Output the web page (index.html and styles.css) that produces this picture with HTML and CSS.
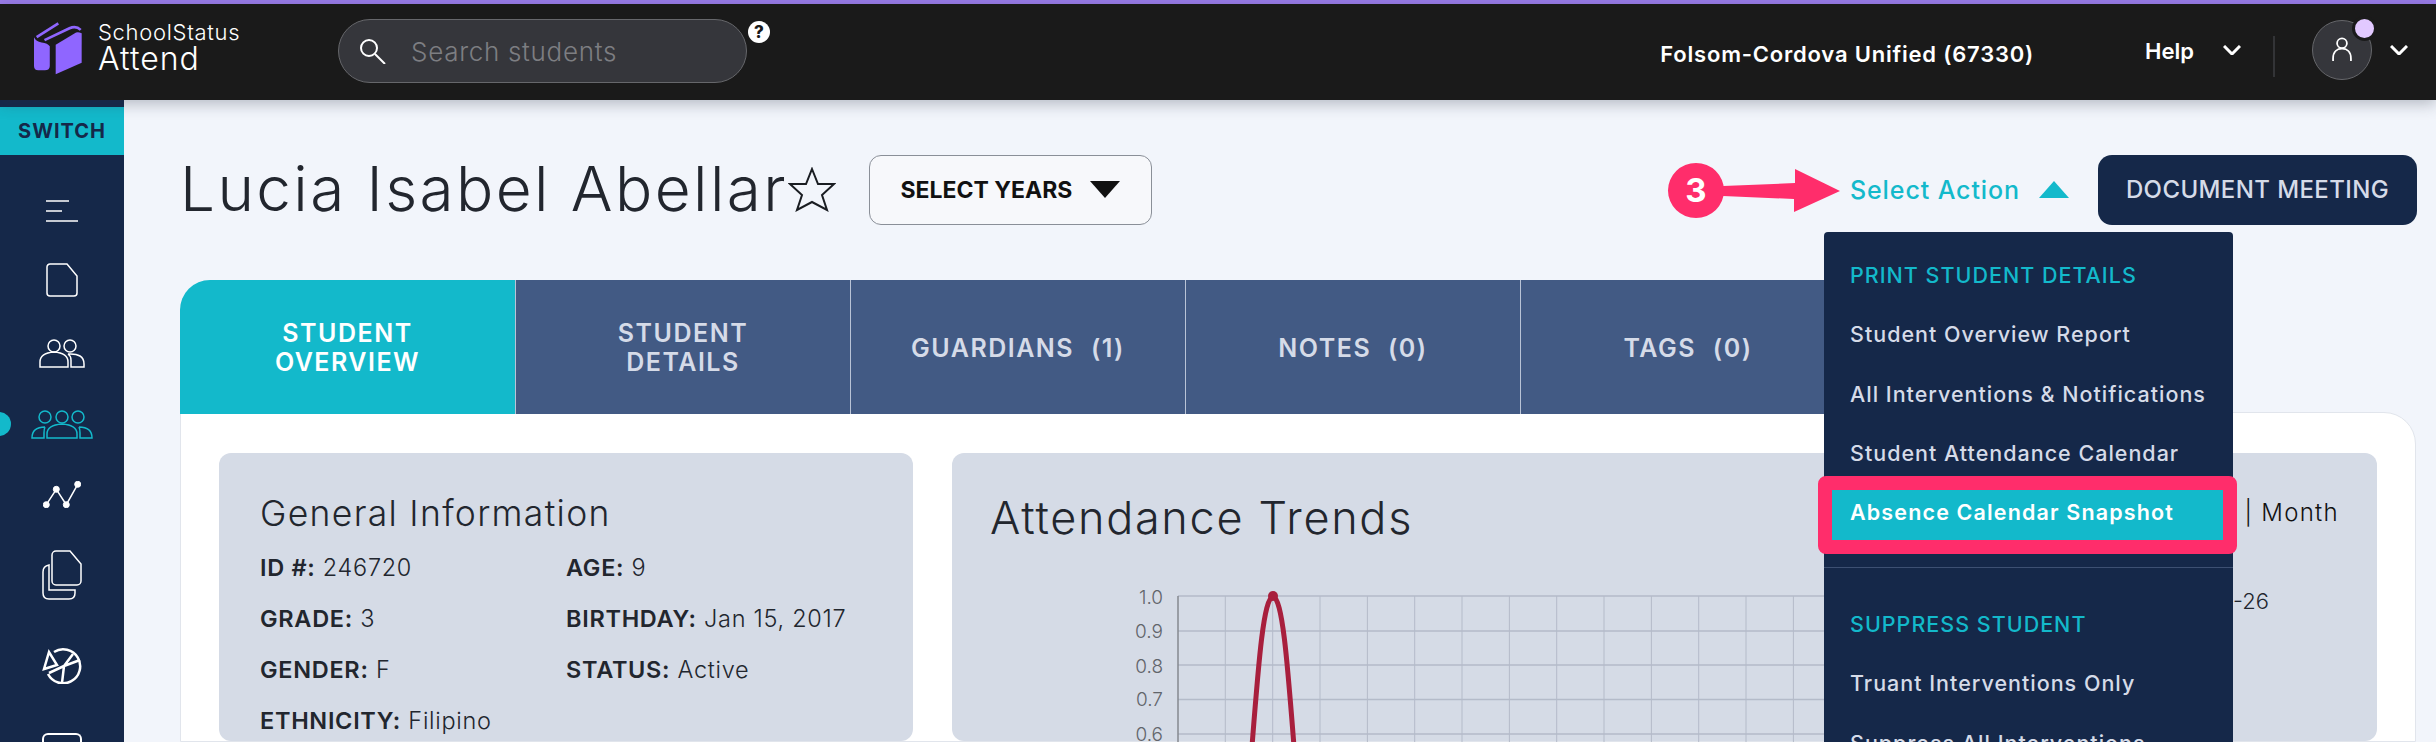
FILE: index.html
```html
<!DOCTYPE html>
<html lang="en">
<head>
    <meta charset="UTF-8">
    <title>Student Overview</title>
    <link rel="stylesheet" href="styles.css">
</head>
<body>
<div class="topline"></div>
<header class="header">
    <svg class="logo" viewBox="42 24 146 162">
        <path d="M42 72 Q48 85 65 88 Q84 90 90 100 V160 Q90 173 75 173 H55 Q42 173 42 160 Z"/>
        <path d="M108 95 L170 58 Q176 55 187 60 V150 L108 185 Z"/>
        <path class="logo-band" d="M50 72 L116 30"/>
        <path class="logo-band" d="M74 81 L150 45 Q170 36 184 50"/>
    </svg>
    <div class="brand">
        <div class="brand-top">SchoolStatus</div>
        <div class="brand-name">Attend</div>
    </div>
    <div class="search">
        <svg class="search-icon" viewBox="0 0 26 25"><circle cx="9" cy="9" r="8"/><path d="M15 15 L25 25"/></svg>
        <span class="search-text">Search students</span>
    </div>
    <div class="help-badge">?</div>
    <div class="district">Folsom-Cordova Unified (67330)</div>
    <div class="help">Help</div>
    <svg class="chevron chevron-help" viewBox="0 0 18 10"><path d="M1 1 L9 9 L17 1"/></svg>
    <div class="header-divider"></div>
    <div class="avatar">
        <svg class="avatar-icon" viewBox="0 0 24 28"><circle cx="12" cy="7" r="5.5"/><path d="M2 27 V24 C2 16 7 13 12 13 C17 13 22 16 22 24 V27"/></svg>
        <span class="avatar-dot"></span>
    </div>
    <svg class="chevron chevron-user" viewBox="0 0 18 10"><path d="M1 1 L9 9 L17 1"/></svg>
</header>

<div class="layout">
    <nav class="sidebar">
        <div class="switch">SWITCH</div>
        <div class="nav-icons">
            <svg class="nav-menu" viewBox="0 0 32 22"><path d="M0 1 H23 M0 11 H16 M0 21 H32"/></svg>
            <svg class="nav-doc" viewBox="0 0 32 34"><path d="M4 1 H21 L31 13 V30 a3 3 0 0 1 -3 3 H4 a3 3 0 0 1 -3 -3 V4 a3 3 0 0 1 3 -3 Z"/></svg>
            <svg class="nav-users" viewBox="0 0 46 29"><circle cx="15" cy="7" r="6"/><circle cx="31" cy="7" r="6"/><path d="M1 28 V23 Q1 14 15 13 Q29 14 29 23 V28 Z"/><path d="M29 15 Q45 14 45 25 V28 H32 V21 Q32 17 29 15"/></svg>
            <div class="nav-active">
                <span class="nav-dot"></span>
                <svg class="nav-group" viewBox="0 0 62 29"><circle cx="14" cy="7" r="6"/><circle cx="31" cy="7" r="6"/><circle cx="47" cy="7" r="6"/><path d="M16 28 V24 Q16 15 31 14 Q46 15 46 24 V28 Z"/><path d="M14 17 Q1 17 1 28 H13 V23 Q13 19 14 17"/><path d="M48 17 Q61 17 61 28 H49 V23 Q49 19 48 17"/></svg>
            </div>
            <svg class="nav-graph" viewBox="0 0 38 27"><path class="graph-line" d="M3.3 23.7 L13.3 8.3 L23.3 23.7 L34.7 3.3"/><circle cx="3.3" cy="23.7" r="3"/><circle cx="13.3" cy="8.3" r="3"/><circle cx="23.3" cy="23.7" r="3"/><circle cx="34.7" cy="3.3" r="3"/></svg>
            <svg class="nav-docs" viewBox="0 0 40 50"><path d="M14 1 H28 L39 14 V31 a4 4 0 0 1 -4 4 H14 a4 4 0 0 1 -4 -4 V5 a4 4 0 0 1 4 -4 Z"/><path d="M7 15 Q1 16 1 22 V43 Q1 49 7 49 H27 Q33 49 33 43 V40 H7 Z"/></svg>
            <svg class="nav-pie" viewBox="0 0 40 36"><path d="M12 4 A17 17 0 1 1 6 26"/><path d="M2 21 L7 4 L15 17 Z"/><path d="M22 18 L31 6 M22 18 L38 12 M22 18 L20 35 M22 18 L7 25"/></svg>
            <div class="nav-last"></div>
        </div>
    </nav>

    <main class="main">
        <div class="title-row">
            <h1 class="student-name">Lucia Isabel Abellar</h1>
            <svg class="star" viewBox="0 0 48 45"><path d="M24 2 L30 17 L46 17 L34 28 L39 43 L24 35 L9 43 L14 28 L2 17 L18 17 Z"/></svg>
            <button class="select-years">SELECT YEARS <span class="caret-down"></span></button>
            <div class="select-action">Select Action <span class="caret-up"></span></div>
            <button class="document-meeting">DOCUMENT MEETING</button>
        </div>

        <div class="tabs">
            <div class="tab tab-active">STUDENT<br>OVERVIEW</div>
            <div class="tab">STUDENT<br>DETAILS</div>
            <div class="tab">GUARDIANS (1)</div>
            <div class="tab">NOTES (0)</div>
            <div class="tab">TAGS (0)</div>
        </div>

        <div class="panel">
            <section class="box info-box">
                <h2 class="info-title">General Information</h2>
                <div class="info-grid">
                    <div><b>ID #:</b> 246720</div>
                    <div><b>AGE:</b> 9</div>
                    <div><b>GRADE:</b> 3</div>
                    <div><b>BIRTHDAY:</b> Jan 15, 2017</div>
                    <div><b>GENDER:</b> F</div>
                    <div><b>STATUS:</b> Active</div>
                    <div><b>ETHNICITY:</b> Filipino</div>
                </div>
            </section>
            <section class="box trends-box">
                <div class="trends-head">
                    <h2 class="trends-title">Attendance Trends</h2>
                    <div class="trends-range">| Month</div>
                </div>
                <svg class="chart" viewBox="0 0 1425 162">
                    <g class="grid">
                        <path d="M273.3 15 V162 M320.7 15 V162 M368 15 V162 M415.4 15 V162 M462.7 15 V162 M510 15 V162 M557.4 15 V162 M604.7 15 V162 M652 15 V162 M699.4 15 V162 M746.7 15 V162 M794 15 V162 M841.4 15 V162"/>
                        <path d="M226 15 H880 M226 50 H880 M226 84 H880 M226 118.500 H880 M226 153 H880"/>
                    </g>
                    <path class="axis" d="M226 15 V162"/>
                    <g class="ticks">
                        <text x="211" y="23">1.0</text>
                        <text x="211" y="57">0.9</text>
                        <text x="211" y="92">0.8</text>
                        <text x="211" y="125">0.7</text>
                        <text x="211" y="160">0.6</text>
                    </g>
                    <path class="trend-line" d="M299 178 C306 90 311 16 321 16 C331 16 336 90 343 178"/>
                    <circle class="trend-point" cx="321" cy="15" r="5"/>
                    <text class="legend" x="1281" y="28">-26</text>
                </svg>
            </section>
        </div>

        <div class="menu">
            <div class="menu-item menu-head">PRINT STUDENT DETAILS</div>
            <div class="menu-item">Student Overview Report</div>
            <div class="menu-item">All Interventions &amp; Notifications</div>
            <div class="menu-item">Student Attendance Calendar</div>
            <div class="menu-item menu-current">Absence Calendar Snapshot</div>
            <div class="menu-sep"></div>
            <div class="menu-item menu-head">SUPPRESS STUDENT</div>
            <div class="menu-item">Truant Interventions Only</div>
            <div class="menu-item">Suppress All Interventions</div>
        </div>
    </main>
</div>

<div class="callout">
    <span class="callout-num">3</span>
    <svg class="callout-arrow" viewBox="0 0 125 43"><path d="M0 17 L72 14 L72 0 L117 22 L71 43 L71 30 L0 27 Z"/></svg>
</div>
</body>
</html>
```

FILE: styles.css
```css
* {
    box-sizing: border-box;
}

html, body {
    margin: 0;
    height: 742px;
    overflow: hidden;
}

body {
    position: relative;
    background: #f2f5fb;
    color: #22262e;
    font-family: Inter, "Open Sans", sans-serif;
}

.topline {
    height: 4px;
    background: #9a7ce9;
}

/* header */
.header {
    position: relative;
    z-index: 2;
    display: flex;
    align-items: center;
    height: 96px;
    padding-left: 34px;
    background: #1a1a1a;
    color: #fff;
    box-shadow: 0 4px 14px rgba(40, 50, 70, .3);
}

.logo {
    width: 48px;
    height: 54px;
    fill: #8f66ff;
    margin-top: -9px;
}

.logo-band {
    fill: none;
    stroke: #8f66ff;
    stroke-width: 8;
}

.brand {
    width: 240px;
    margin-left: 16px;
    font-weight: 300;
}

.brand-top {
    font-size: 22px;
    letter-spacing: .7px;
    line-height: 22px;
    margin-top: -8px;
}

.brand-name {
    font-size: 32px;
    letter-spacing: 1px;
    line-height: 32px;
}

.search {
    display: flex;
    align-items: center;
    width: 409px;
    height: 64px;
    margin-top: -2px;
    padding-left: 21px;
    background: #35363b;
    border: 1px solid #66676b;
    border-radius: 32px;
}

.search-icon {
    width: 26px;
    height: 25px;
    fill: none;
    stroke: #fff;
    stroke-width: 2;
}

.search-text {
    margin-left: 25px;
    font-size: 26px;
    font-weight: 300;
    letter-spacing: .7px;
    color: #7d7e82;
}

.help-badge {
    align-self: flex-start;
    width: 22px;
    height: 22px;
    margin: 17px 0 0 1px;
    background: #fff;
    border-radius: 50%;
    color: #1a1a1a;
    font-size: 17px;
    font-weight: 800;
    line-height: 22px;
    text-align: center;
}

.district {
    margin-left: auto;
    font-size: 22px;
    font-weight: 600;
    letter-spacing: .8px;
    margin-top: 4px;
}

.help {
    margin-left: 111px;
    font-size: 22px;
    font-weight: 600;
    margin-top: -2px;
}

.chevron {
    width: 18px;
    height: 10px;
    fill: none;
    stroke: #fff;
    stroke-width: 3;
    margin-top: -4px;
}

.chevron-help {
    margin-left: 29px;
}

.header-divider {
    width: 2px;
    height: 41px;
    margin: 8px 0 0 32px;
    background: #333437;
}

.avatar {
    position: relative;
    display: flex;
    align-items: center;
    justify-content: center;
    width: 60px;
    height: 60px;
    margin: -4px 0 0 37px;
    background: #35363b;
    border: 1px solid #66676b;
    border-radius: 50%;
}

.avatar-icon {
    width: 22px;
    height: 25px;
    fill: none;
    stroke: #fff;
    stroke-width: 2;
    margin-top: -2px;
}

.avatar-dot {
    position: absolute;
    top: -5px;
    right: -6px;
    width: 25px;
    height: 25px;
    background: #e2c9ff;
    border: 3px solid #1a1a1a;
    border-radius: 50%;
}

.chevron-user {
    margin-left: 18px;
    margin-right: 28px;
}

/* page */
.layout {
    display: flex;
    height: 642px;
    overflow: hidden;
}

/* sidebar */
.sidebar {
    flex: none;
    width: 124px;
    padding-top: 7px;
    background: #152849;
}

.switch {
    height: 48px;
    background: #13b9cb;
    color: #152849;
    font-size: 20px;
    font-weight: 700;
    letter-spacing: 1px;
    line-height: 49px;
    text-align: center;
}

.nav-icons {
    display: flex;
    flex-direction: column;
    align-items: center;
    gap: 42px;
    padding-top: 45px;
    fill: none;
    stroke: #fff;
    stroke-width: 1.500;
}

.nav-menu {
    width: 32px;
    height: 22px;
    margin-bottom: -1px;
}

.nav-doc {
    width: 32px;
    height: 34px;
}

.nav-users {
    width: 46px;
    height: 29px;
}

.nav-active {
    position: relative;
    display: flex;
    height: 29px;
}

.nav-group {
    width: 62px;
    height: 29px;
    stroke: #13b9cb;
}

.nav-dot {
    position: absolute;
    left: -44px;
    top: 2px;
    width: 24px;
    height: 24px;
    background: #13b9cb;
    border-radius: 50%;
}

.nav-graph {
    width: 38px;
    height: 27px;
    fill: #fff;
    stroke-width: 1;
}

.graph-line {
    fill: none;
    stroke-width: 1.500;
}

.nav-docs {
    width: 40px;
    height: 50px;
}

.nav-pie {
    width: 40px;
    height: 36px;
    margin-top: 6px;
    stroke-width: 2.500;
}

.nav-last {
    width: 40px;
    height: 9px;
    margin-top: 7px;
    border: 2px solid #fff;
    border-bottom: 0;
    border-radius: 6px 6px 0 0;
}

/* main */
.main {
    position: relative;
    flex: 1;
    padding: 54px 20px 0 56px;
}

.title-row {
    display: flex;
    align-items: center;
    height: 71px;
}

.student-name {
    margin: -2px 0 0;
    font-size: 62px;
    font-weight: 300;
    letter-spacing: 2.400px;
    color: #22262e;
}

.star {
    width: 48px;
    height: 45px;
    fill: none;
    stroke: #1a1d22;
    stroke-width: 2;
    margin-left: 0;
}

.select-years {
    display: flex;
    align-items: center;
    justify-content: center;
    gap: 18px;
    width: 283px;
    height: 70px;
    margin-left: 33px;
    background: #f7f8fb;
    border: 1px solid #8a8f98;
    border-radius: 12px;
    color: #111;
    font: 700 23px Inter, sans-serif;
}

.caret-down {
    width: 0;
    height: 0;
    border-left: 15px solid transparent;
    border-right: 15px solid transparent;
    border-top: 17px solid #111;
}

.select-action {
    display: flex;
    align-items: center;
    gap: 19px;
    margin-left: auto;
    color: #13b9cb;
    font-size: 25px;
    font-weight: 500;
    letter-spacing: .9px;
}

.caret-up {
    width: 0;
    height: 0;
    border-left: 15px solid transparent;
    border-right: 15px solid transparent;
    border-bottom: 17px solid #13b9cb;
}

.document-meeting {
    width: 319px;
    height: 70px;
    margin: 0 -1px 0 29px;
    background: #152849;
    border: 0;
    border-radius: 14px;
    color: #d5dbe8;
    font: 500 24px Inter, sans-serif;
    letter-spacing: .4px;
}

/* tabs */
.tabs {
    display: flex;
    margin-top: 55px;
}

.tab {
    display: flex;
    align-items: center;
    justify-content: center;
    width: 335px;
    height: 134px;
    padding-top: 2px;
    background: #425a84;
    border-right: 1px solid #b9c3d6;
    color: #d5dbe8;
    font-size: 25px;
    font-weight: 600;
    letter-spacing: 1.500px;
    word-spacing: 9px;
    line-height: 29px;
    text-align: center;
}

.tab-active {
    width: 336px;
    background: #13b9cb;
    border-top-left-radius: 30px;
    color: #fff;
}

/* panel */
.panel {
    display: flex;
    gap: 39px;
    height: 330px;
    padding: 40px 38px 0;
    background: #fff;
    border: 1px solid #e1e5ec;
    border-radius: 0 32px 0 0;
    margin-top: -2px;
}

.box {
    background: #d5dbe6;
    border-radius: 12px;
}

.info-box {
    flex: none;
    width: 694px;
    padding: 36px 41px 0;
}

.info-title {
    margin: 0;
    font-size: 35.500px;
    font-weight: 300;
    letter-spacing: 1.300px;
    line-height: 50px;
}

.info-grid {
    display: grid;
    grid-template-columns: 306px 1fr;
    grid-auto-rows: 51px;
    align-items: center;
    margin-top: 3px;
    font-size: 23.500px;
    font-weight: 300;
    letter-spacing: .7px;
}

.info-grid b {
    font-weight: 600;
}

.trends-box {
    flex: 1;
}

.trends-head {
    display: flex;
    align-items: center;
    justify-content: space-between;
    height: 128px;
    padding: 0 38px;
}

.trends-title {
    margin: 0;
    font-size: 45px;
    font-weight: 300;
    letter-spacing: 1.700px;
}

.trends-range {
    margin-top: -10px;
    font-size: 24px;
    font-weight: 300;
    letter-spacing: 1.300px;
    color: #111;
}

.chart {
    display: block;
    width: 1425px;
    height: 162px;
}

.grid path {
    fill: none;
    stroke: #b4bbc9;
    stroke-width: 1;
}

.grid path + path {
    stroke-width: 1.500;
}

.axis {
    stroke: #85888f;
    stroke-width: 1.500;
}

.ticks text {
    fill: #62656b;
    font-size: 19px;
    font-weight: 300;
    text-anchor: end;
}

.trend-line {
    fill: none;
    stroke: #a81f3d;
    stroke-width: 5;
}

.trend-point {
    fill: #a81f3d;
}

.legend {
    font-size: 22px;
    font-weight: 300;
    fill: #22262e;
}

/* action menu */
.menu {
    position: absolute;
    left: 1700px;
    top: 132px;
    display: flex;
    flex-direction: column;
    gap: 9.330px;
    width: 409px;
    height: 510px;
    padding: 21px 10px 0 8px;
    background: #152849;
    border-radius: 4px 4px 0 0;
    color: #d5dbe8;
    font-size: 21.500px;
    font-weight: 500;
    letter-spacing: 1px;
}

.menu-item {
    flex: none;
    height: 50px;
    padding: 7px 10px 0 18px;
    line-height: 30px;
    white-space: nowrap;
}

.menu-head {
    color: #13b9cb;
}

.menu-current {
    position: relative;
    background: #13b9cb;
    color: #fff;
    font-weight: 600;
    letter-spacing: 1.150px;
}

.menu-current::after {
    content: "";
    position: absolute;
    top: -14px;
    right: -14px;
    bottom: -14px;
    left: -14px;
    border: 14px solid #ff2d6b;
    border-radius: 8px;
}

.menu-sep {
    flex: none;
    height: 1px;
    margin: 17px -10px 25px -8px;
    background: #3d5072;
}

/* numbered arrow over the page */
.callout {
    position: absolute;
    z-index: 3;
    left: 1668px;
    top: 163px;
    display: flex;
    align-items: center;
}

.callout-num {
    width: 56px;
    height: 55px;
    background: #ff2d6b;
    border-radius: 50%;
    color: #fff;
    font-size: 33px;
    font-weight: 700;
    line-height: 55px;
    text-align: center;
}

.callout-arrow {
    width: 125px;
    height: 43px;
    fill: #ff2d6b;
    margin-left: -1px;
}
```
